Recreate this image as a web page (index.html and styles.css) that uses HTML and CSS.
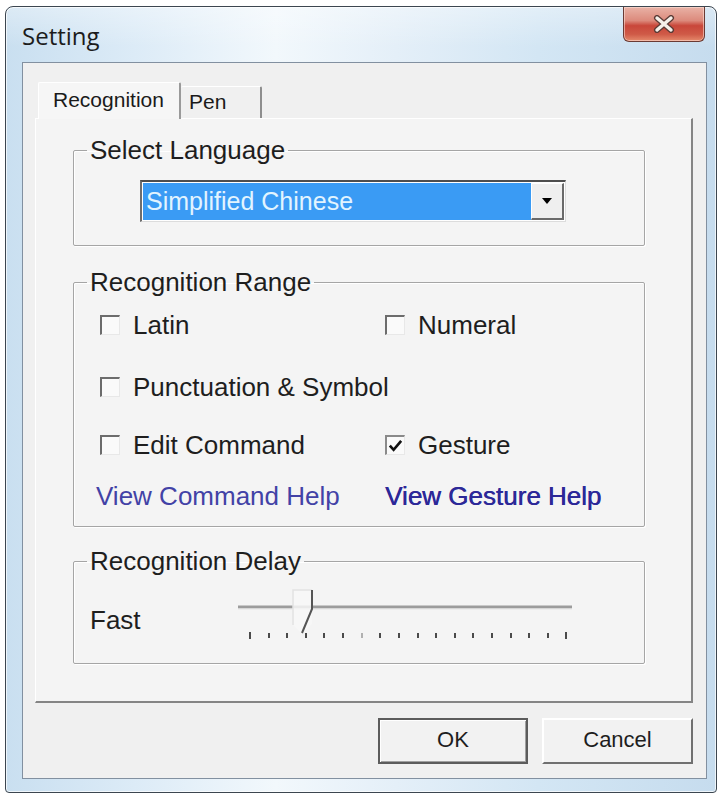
FILE: index.html
```html
<!DOCTYPE html>
<html>
<head>
<meta charset="utf-8">
<title>Setting</title>
<link rel="stylesheet" href="styles.css">
</head>
<body>
<div class="window">
  <div class="titlebar">
    <div class="title">Setting</div>
    <div class="close">
      <svg width="22" height="18" viewBox="0 0 22 18">
        <path d="M4 3 L18 15 M18 3 L4 15" stroke="#5a3b36" stroke-width="6" stroke-linecap="round" fill="none"/>
        <path d="M4 3 L18 15 M18 3 L4 15" stroke="#f4f0ea" stroke-width="3.4" stroke-linecap="round" fill="none"/>
      </svg>
    </div>
  </div>
  <div class="client">
    <div class="tabs">
      <div class="tab tab-active">Recognition</div>
      <div class="tab tab-pen">Pen</div>
    </div>
    <div class="panel">
      <fieldset class="group group-lang">
        <legend>Select Language</legend>
        <div class="combo">
          <div class="combo-sel">Simplified Chinese</div>
          <div class="combo-btn">
            <svg width="12" height="8" viewBox="0 0 12 8"><path d="M1 1 L11 1 L6 7 Z" fill="#000"/></svg>
          </div>
        </div>
      </fieldset>
      <fieldset class="group group-range">
        <legend>Recognition Range</legend>
        <div class="range-grid">
          <div class="check"><span class="box"></span><span>Latin</span></div>
          <div class="check"><span class="box"></span><span>Numeral</span></div>
          <div class="check span2"><span class="box"></span><span>Punctuation &amp; Symbol</span></div>
          <div class="check"><span class="box"></span><span>Edit Command</span></div>
          <div class="check"><span class="box box-on"><svg width="18" height="18" viewBox="0 0 18 18"><path d="M3 8.5 L7 13 L15 3.5" stroke="#111" stroke-width="2.8" fill="none"/></svg></span><span>Gesture</span></div>
          <div class="link link-cmd">View Command Help</div>
          <div class="link link-ges">View Gesture Help</div>
        </div>
      </fieldset>
      <fieldset class="group group-delay">
        <legend>Recognition Delay</legend>
        <div class="delay-row">
          <div class="fast">Fast</div>
          <svg class="slider" width="345" height="56" viewBox="0 0 345 56">
            <line x1="6" y1="22" x2="340" y2="22" stroke="#9c9c9c" stroke-width="3"/>
            <line x1="6" y1="24" x2="340" y2="24" stroke="#e4e4e4" stroke-width="1"/>
            <path d="M61 5 L80 5 L80 39 L70 49 L61 40 Z" fill="#f7f7f7" fill-opacity="0.85"/>
            <path d="M61 40 L61 5 L80 5" stroke="#e2e2e2" stroke-width="1.5" fill="none"/>
            <path d="M80 5 L80 24 L70 48" stroke="#555" stroke-width="2" fill="none"/>
            <g fill="#4a4a4a">
              <rect x="17" y="47" width="2" height="7"/>
              <rect x="36" y="48" width="2" height="5"/>
              <rect x="54" y="48" width="2" height="5"/>
              <rect x="73" y="48" width="2" height="5"/>
              <rect x="91" y="48" width="2" height="5"/>
              <rect x="110" y="48" width="2" height="5"/>
              <rect x="129" y="48" width="2" height="5" fill="#b0b0b0"/>
              <rect x="147" y="48" width="2" height="5"/>
              <rect x="166" y="48" width="2" height="5"/>
              <rect x="185" y="48" width="2" height="5"/>
              <rect x="203" y="48" width="2" height="5"/>
              <rect x="222" y="48" width="2" height="5"/>
              <rect x="240" y="48" width="2" height="5"/>
              <rect x="259" y="48" width="2" height="5"/>
              <rect x="278" y="48" width="2" height="5"/>
              <rect x="296" y="48" width="2" height="5"/>
              <rect x="315" y="48" width="2" height="5"/>
              <rect x="333" y="47" width="2" height="7"/>
            </g>
          </svg>
        </div>
      </fieldset>
    </div>
    <div class="buttons">
      <div class="btn btn-ok">OK</div>
      <div class="btn btn-cancel">Cancel</div>
    </div>
  </div>
</div>
</body>
</html>
```
FILE: styles.css
```css
html, body {
  margin: 0;
  padding: 0;
  background: #ffffff;
}

body {
  font-family: "Liberation Sans", Arial, sans-serif;
  color: #1a1a1a;
}

.window {
  box-sizing: border-box;
  margin: 6px 0 0 5px;
  width: 712px;
  height: 787px;
  border: 1px solid #3c4650;
  border-radius: 8px 8px 4px 4px;
  background:
    linear-gradient(180deg, rgba(255,255,255,0.35), rgba(255,255,255,0) 40px),
    linear-gradient(90deg, #c9dff0 0%, #dcebf7 18%, #f2f8fc 38%, #e4eff8 55%, #d3e6f4 75%, #c6dcee 100%);
  box-shadow: inset 0 0 0 1px rgba(255,255,255,0.7);
  padding: 0 9px 13px 16px;
  display: flex;
  flex-direction: column;
}

.titlebar {
  height: 55px;
  flex: none;
  display: flex;
  justify-content: space-between;
  align-items: flex-start;
}

.title {
  font-family: "Open Sans", "Noto Sans", sans-serif;
  font-size: 24px;
  line-height: 30px;
  padding-top: 14px;
  color: #1c1c1c;
}

.close {
  box-sizing: border-box;
  width: 82px;
  height: 35px;
  margin-right: 2px;
  border: 1px solid #6a3a34;
  border-top: none;
  border-radius: 0 0 6px 6px;
  background: linear-gradient(180deg, #e9b2a6 0%, #dc8a7c 40%, #c9473a 55%, #cf5a47 80%, #e58a6c 100%);
  box-shadow: inset 0 0 0 1px rgba(255,230,220,0.55);
  display: flex;
  align-items: center;
  justify-content: center;
}

.client {
  flex: 1;
  box-sizing: border-box;
  background: #f0f0f0;
  border: 1px solid #8290a0;
  padding: 19px 13px 0 12px;
  display: flex;
  flex-direction: column;
}

.tabs {
  display: flex;
  align-items: flex-end;
  margin-left: 3px;
  height: 36px;
  flex: none;
}

.tab {
  box-sizing: border-box;
  font-size: 21px;
  line-height: 30px;
  color: #1a1a1a;
  border-top: 1px solid #ffffff;
  border-left: 1px solid #ffffff;
  border-right: 2px solid #8e8e8e;
  border-radius: 2px 2px 0 0;
}

.tab-active {
  position: relative;
  z-index: 1;
  width: 143px;
  height: 37px;
  margin-bottom: -1px;
  padding: 2px 0 0 14px;
  background: #f6f6f6;
  border-right-color: #9a9a9a;
}

.tab-pen {
  width: 81px;
  height: 32px;
  padding: 0 0 0 8px;
  border-left: none;
  background: #f0f0f0;
}

.panel {
  box-sizing: border-box;
  height: 585px;
  flex: none;
  background: #f4f4f4;
  border-top: 1px solid #ffffff;
  border-left: 1px solid #ffffff;
  border-right: 2px solid #858585;
  border-bottom: 2px solid #858585;
  padding: 17px 46px 0 37px;
}

.group {
  margin: 0;
  border: 1px solid #a5a5a5;
  box-shadow: inset 1px 1px 0 #ffffff, 1px 1px 0 #ffffff;
  border-radius: 2px;
  min-width: 0;
}

.group legend {
  font-size: 26px;
  line-height: 29px;
  padding: 0 3px;
  color: #1e1e1e;
}

.group-lang {
  padding: 15px 0 23px 66px;
}

.group-lang legend {
  margin-left: -53px;
}

.combo {
  box-sizing: border-box;
  width: 426px;
  height: 42px;
  display: flex;
  border-top: 2px solid #4e4e4e;
  border-left: 2px solid #6e6e6e;
  border-right: 1px solid #dcdcdc;
  border-bottom: 1px solid #dcdcdc;
  background: #ffffff;
  padding: 1px;
}

.combo-sel {
  flex: 1;
  background: #3a9bf4;
  color: #e2f4ff;
  font-size: 25px;
  line-height: 36px;
  padding-left: 3px;
  white-space: nowrap;
}

.combo-btn {
  box-sizing: border-box;
  width: 33px;
  background: #efefef;
  border-top: 1px solid #ffffff;
  border-left: 1px solid #ffffff;
  border-right: 2px solid #6a6a6a;
  border-bottom: 2px solid #6a6a6a;
  display: flex;
  align-items: center;
  justify-content: center;
}

.group-range {
  margin-top: 22px;
  padding: 13px 0 15px 26px;
}

.group-range legend {
  margin-left: -13px;
}

.range-grid {
  display: grid;
  grid-template-columns: 285px 1fr;
  grid-template-rows: 62px 58px 51px 30px;
  align-items: start;
}

.span2 {
  grid-column: 1 / 3;
}

.check {
  display: flex;
  align-items: center;
  gap: 13px;
  height: 30px;
  font-size: 26px;
  line-height: 30px;
  color: #1e1e1e;
}

.box {
  box-sizing: border-box;
  flex: none;
  width: 20px;
  height: 20px;
  border-top: 2px solid #6c6c6c;
  border-left: 2px solid #6c6c6c;
  border-right: 1px solid #e8e8e8;
  border-bottom: 1px solid #e8e8e8;
  background: #fafafa;
  display: flex;
  align-items: center;
  justify-content: center;
}

.box-on {
  border-top-color: #8a8a8a;
  border-left-color: #8a8a8a;
}

.link {
  font-size: 26px;
  line-height: 30px;
  white-space: nowrap;
}

.link-cmd {
  color: #4242a6;
  margin-left: -4px;
}

.link-ges {
  color: #2c2898;
  text-shadow: 0.5px 0 0 #2c2898;
}

.group-delay {
  margin-top: 20px;
  padding: 9px 0 22px 16px;
}

.group-delay legend {
  margin-left: -3px;
}

.delay-row {
  display: flex;
  align-items: flex-start;
}

.fast {
  width: 142px;
  flex: none;
  font-size: 26px;
  line-height: 30px;
  margin-top: 20px;
  color: #1e1e1e;
}

.slider {
  display: block;
  flex: none;
}

.buttons {
  display: flex;
  justify-content: flex-end;
  gap: 14px;
  margin-top: 15px;
}

.btn {
  box-sizing: border-box;
  width: 150px;
  height: 46px;
  font-size: 22px;
  line-height: 40px;
  text-align: center;
  color: #1e1e1e;
  background: #f2f2f2;
}

.btn-ok {
  border: 2px solid #5c5c5c;
  box-shadow: inset 1px 1px 0 #ffffff, inset -1px -1px 0 #a0a0a0;
}

.btn-cancel {
  width: 151px;
  border-top: 2px solid #ffffff;
  border-left: 2px solid #ffffff;
  border-right: 2px solid #707070;
  border-bottom: 2px solid #707070;
}
```
